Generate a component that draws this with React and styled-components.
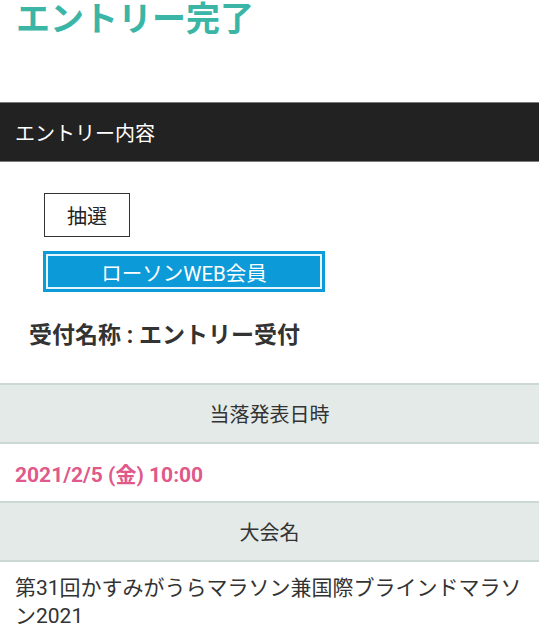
import React from 'react'
import styled, { createGlobalStyle } from 'styled-components'

const GlobalStyle = createGlobalStyle`
  html, body {
    margin: 0;
    padding: 0;
    background: #fff;
  }
  body {
    font-family: Roboto, "Noto Sans CJK JP", sans-serif;
    color: #333;
  }
`

const Page = styled.div`
  width: 539px;
  overflow: hidden;
`

const Title = styled.h1`
  margin: 0;
  padding: 2px 0 0 16px;
  font-size: 34px;
  line-height: 34px;
  font-weight: 700;
  color: #3ab5a6;
`

const SectionBar = styled.div`
  margin-top: 66px;
  height: 58px;
  display: flex;
  align-items: center;
  padding-left: 15px;
  background: #222;
  border-top: 1px solid #7a7a7a;
  border-bottom: 1px solid #7a7a7a;
  color: #fff;
  font-size: 20px;
`

const Body = styled.div`
  padding: 31px 0 0 43px;
  display: flex;
  flex-direction: column;
  align-items: flex-start;
`

const Tag = styled.div`
  margin-left: 1px;
  width: 86px;
  height: 44px;
  box-sizing: border-box;
  border: 1.5px solid #333;
  display: flex;
  align-items: center;
  justify-content: center;
  font-size: 20px;
  color: #222;
`

const MemberButton = styled.div`
  margin-top: 14px;
  width: 282px;
  height: 41px;
  box-sizing: border-box;
  border: 3px solid #0c9ad8;
  background: #0c9ad8;
  box-shadow: inset 0 0 0 2px #e4f5fc;
  display: flex;
  align-items: center;
  justify-content: center;
  color: #fff;
  font-size: 20.5px;
`

const Reception = styled.div`
  margin: 28px 0 0 -14px;
  font-size: 23px;
  line-height: 32px;
  font-weight: 700;
  color: #333;
`

const HeadRow = styled.div`
  margin-top: ${p => p.$top || 0}px;
  height: 57px;
  display: flex;
  align-items: center;
  justify-content: center;
  background: #e3eae8;
  border-top: 2px solid #ccd8d4;
  border-bottom: 2px solid #ccd8d4;
  font-size: 20px;
  color: #333;
`

const DateRow = styled.div`
  height: 57px;
  display: flex;
  align-items: center;
  padding-left: 15px;
  font-size: 21px;
  font-weight: 700;
  color: #e0598b;
`

const NameText = styled.div`
  padding: 12px 15px 0 15px;
  font-size: 21px;
  line-height: 28px;
  color: #333;
`

export default function App() {
  return (
    <Page>
      <GlobalStyle />
      <Title>エントリー完了</Title>
      <SectionBar>エントリー内容</SectionBar>
      <Body>
        <Tag>抽選</Tag>
        <MemberButton>ローソンWEB会員</MemberButton>
        <Reception>受付名称 : エントリー受付</Reception>
      </Body>
      <HeadRow $top={31}>当落発表日時</HeadRow>
      <DateRow>2021/2/5 (金) 10:00</DateRow>
      <HeadRow>大会名</HeadRow>
      <NameText>第31回かすみがうらマラソン兼国際ブラインドマラソン2021</NameText>
    </Page>
  )
}
